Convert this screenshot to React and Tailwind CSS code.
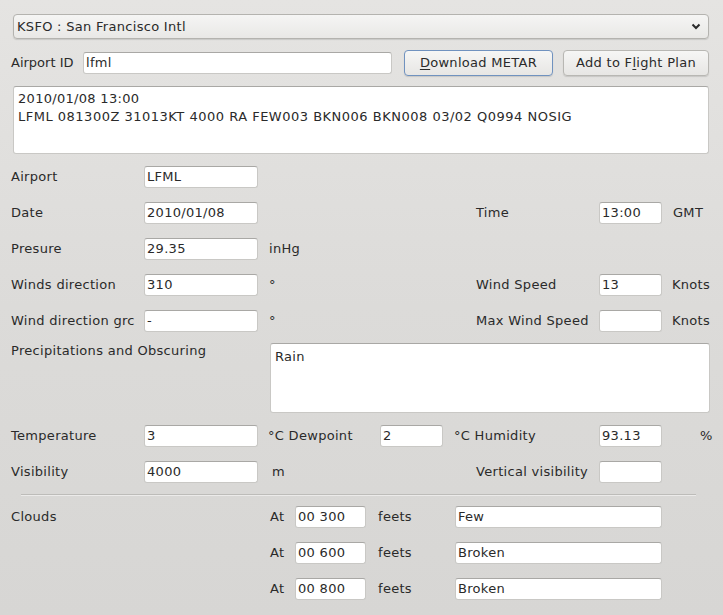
import React from "react";

const inputCls =
  "shrink-0 h-[22px] bg-white border border-[#c9c8c5] border-t-[#a9a8a5] rounded-[3px] px-[2px] flex items-center whitespace-nowrap overflow-hidden";

function Field({ w, value = "" }) {
  return (
    <div className={inputCls} style={{ width: w }}>
      {value}
    </div>
  );
}

function Row({ children, className = "" }) {
  return <div className={"flex items-center h-[22px] whitespace-nowrap [&>*]:shrink-0 " + className}>{children}</div>;
}

export default function App() {
  return (
    <div className="w-[723px] h-[615px] overflow-hidden bg-gradient-to-b from-[#e5e4e2] via-[#dcdbd9] to-[#d7d6d4] text-[13px] leading-[16px] tracking-[0.3px] text-[#2a2a2a] font-['DejaVu_Sans',sans-serif]">
      <div className="pl-[11px] pr-[14px] pt-[14px]">
        {/* Combobox */}
        <div className="ml-[2px] h-[25px] rounded-[4px] border border-[#b4b3af] bg-gradient-to-b from-[#f5f5f4] to-[#e9e8e6] shadow-[0_1px_1px_rgba(0,0,0,0.12)] flex items-center justify-between pl-[3px] pr-[7px]">
          <span>KSFO : San Francisco Intl</span>
          <svg width="10" height="7" viewBox="0 0 10 7">
            <polyline points="1.5,1.5 5,5 8.5,1.5" fill="none" stroke="#2a2a2a" strokeWidth="2" />
          </svg>
        </div>

        {/* Airport ID row */}
        <div className="mt-[11px] flex items-center h-[26px] [&>*]:shrink-0">
          <div className="w-[72px] tracking-normal">Airport ID</div>
          <div className={inputCls + " w-[309px] h-[21px]"}>lfml</div>
          <div className="ml-[12px] w-[149px] h-[26px] rounded-[4px] border border-[#7092bf] bg-gradient-to-b from-[#f6f6f5] to-[#e7e6e4] shadow-[0_1px_1px_rgba(0,0,0,0.12)] flex items-center justify-center">
            <span>
              <span className="underline underline-offset-2">D</span>ownload METAR
            </span>
          </div>
          <div className="ml-[10px] w-[146px] h-[26px] rounded-[4px] border border-[#b8b7b3] bg-gradient-to-b from-[#f6f6f5] to-[#e7e6e4] shadow-[0_1px_1px_rgba(0,0,0,0.12)] flex items-center justify-center">
            <span>
              Add to F<span className="underline underline-offset-2">l</span>ight Plan
            </span>
          </div>
        </div>

        {/* METAR text */}
        <div className="ml-[2px] mt-[10px] h-[68px] bg-white border border-[#c9c8c5] border-t-[#a9a8a5] rounded-[3px] pl-[4px] pt-[3px] leading-[18px] whitespace-nowrap">
          <div>2010/01/08 13:00</div>
          <div className="tracking-[0.5px]">LFML 081300Z 31013KT 4000 RA FEW003 BKN006 BKN008 03/02 Q0994 NOSIG</div>
        </div>

        {/* Form rows */}
        <div className="mt-[12px] flex flex-col gap-[14px]">
          <Row>
            <div className="w-[133px]">Airport</div>
            <Field w={114} value="LFML" />
          </Row>
          <Row>
            <div className="w-[133px]">Date</div>
            <Field w={114} value="2010/01/08" />
            <div className="w-[218px]"></div>
            <div className="w-[123px]">Time</div>
            <Field w={63} value="13:00" />
            <div className="pl-[11px]">GMT</div>
          </Row>
          <Row>
            <div className="w-[133px]">Presure</div>
            <Field w={114} value="29.35" />
            <div className="w-[218px] pl-[11px]">inHg</div>
          </Row>
          <Row>
            <div className="w-[133px]">Winds direction</div>
            <Field w={114} value="310" />
            <div className="w-[218px] pl-[11px]">°</div>
            <div className="w-[123px]">Wind Speed</div>
            <Field w={63} value="13" />
            <div className="pl-[10px]">Knots</div>
          </Row>
          <Row>
            <div className="w-[133px] overflow-hidden whitespace-nowrap">Wind direction grc</div>
            <Field w={114} value="-" />
            <div className="w-[218px] pl-[11px]">°</div>
            <div className="w-[123px]">Max Wind Speed</div>
            <Field w={63} value="" />
            <div className="pl-[10px]">Knots</div>
          </Row>
        </div>

        {/* Precipitations */}
        <div className="mt-[11px] flex items-start [&>*]:shrink-0">
          <div className="w-[259px] whitespace-nowrap">Precipitations and Obscuring</div>
          <div className="w-[440px] h-[70px] bg-white border border-[#c9c8c5] border-t-[#a9a8a5] rounded-[3px] pl-[4px] pt-[5px]">
            Rain
          </div>
        </div>

        <div className="mt-[12px] flex flex-col gap-[14px]">
          <Row>
            <div className="w-[133px]">Temperature</div>
            <Field w={114} value="3" />
            <div className="w-[122px] pl-[10px]">°C Dewpoint</div>
            <Field w={63} value="2" />
            <div className="w-[156px] pl-[11px]">°C Humidity</div>
            <Field w={63} value="93.13" />
            <div className="ml-[38px]">%</div>
          </Row>
          <Row>
            <div className="w-[133px]">Visibility</div>
            <Field w={114} value="4000" />
            <div className="w-[218px] pl-[14px]">m</div>
            <div className="w-[123px]">Vertical visibility</div>
            <Field w={63} value="" />
          </Row>
        </div>

        {/* Separator */}
        <div className="mt-[11px] ml-[10px] w-[675px] border-t border-[#bdbcb9] border-b border-b-[#ecebea]"></div>

        {/* Clouds */}
        <div className="mt-[10px] flex flex-col gap-[14px]">
          {[
            ["Clouds", "00 300", "Few"],
            ["", "00 600", "Broken"],
            ["", "00 800", "Broken"],
          ].map(([label, alt, kind], i) => (
            <Row key={i}>
              <div className="w-[259px]">{label}</div>
              <div className="w-[25px]">At</div>
              <Field w={71} value={alt} />
              <div className="w-[89px] pl-[12px]">feets</div>
              <Field w={207} value={kind} />
            </Row>
          ))}
        </div>
      </div>
    </div>
  );
}
